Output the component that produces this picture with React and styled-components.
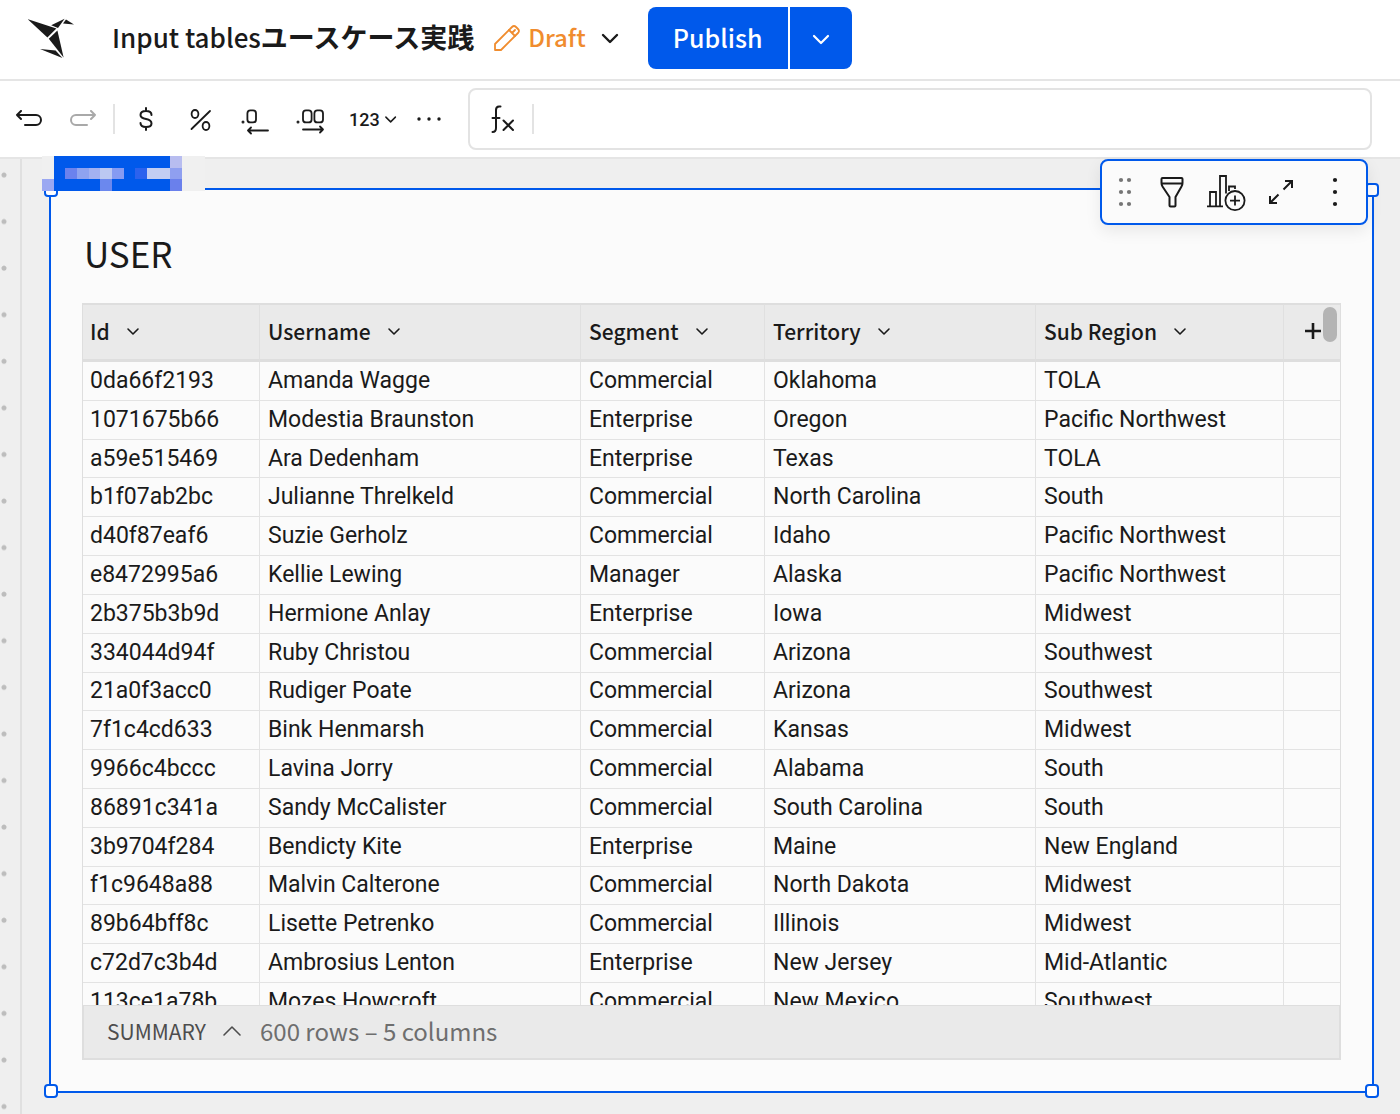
import React from 'react';
import styled, { createGlobalStyle } from 'styled-components';

const GlobalStyle = createGlobalStyle`
  * {
    box-sizing: border-box;
  }
  body {
    margin: 0;
    background: #efefef;
    color: #1a1a1a;
    font-family: "Noto Sans CJK JP", "Noto Sans", sans-serif;
  }
  button, input {
    font: inherit;
    color: inherit;
  }
`

const Page = styled.div`
  display: flex;
  flex-direction: column;
  min-height: 100vh;
`

const IconButton = styled.button`
  display: flex;
  align-items: center;
  justify-content: center;
  flex: none;
  padding: 0;
  border: 0;
  background: none;
  cursor: pointer;
  color: ${props => props.disabled ? '#a9a9a9' : '#1a1a1a'};
`

const Header = styled.header`
  display: flex;
  align-items: center;
  height: 81px;
  padding: 0 28px 3px;
  background: #fff;
  border-bottom: 2px solid #e5e5e5;
`

const LogoLink = styled.a`
  display: flex;
  margin-right: 38px;
`

const DocTitle = styled.h1`
  margin: 0 20px 0 0;
  padding-bottom: 2px;
  font-size: 26px;
  line-height: 36px;
  font-weight: 500;
  white-space: nowrap;
`

const TitleKana = styled.span`
  font-size: 27px;
  font-weight: 700;
`

const DraftButton = styled(IconButton)`
  gap: 8px;
  margin-right: 29px;
  font-size: 24px;
  line-height: 34px;
  font-weight: 500;
`

const DraftLabel = styled.span`
  margin-right: 7px;
  padding-bottom: 2px;
  color: #f08c2e;
`

const PublishGroup = styled.div`
  display: flex;
  gap: 2px;
`

const PublishButton = styled.button`
  display: flex;
  align-items: center;
  justify-content: center;
  width: ${props => props.$menu ? '62px' : '140px'};
  height: 62px;
  padding: ${props => props.$menu ? '2px 0 0' : '0 0 2px'};
  border: 0;
  border-radius: ${props => props.$menu ? '0 8px 8px 0' : '8px 0 0 8px'};
  background: #0059eb;
  color: #fff;
  font-size: 25px;
  font-weight: 500;
  cursor: pointer;
`

const Toolbar = styled.div`
  display: flex;
  align-items: center;
  height: 78px;
  padding: 0 28px 0 15px;
  background: #fff;
  border-bottom: 2px solid #e5e5e5;
`

const HistoryGroup = styled.div`
  display: flex;
  align-items: center;
  gap: 26px;
  margin-right: 16px;
`

const FormatGroup = styled.div`
  display: flex;
  align-items: center;
  gap: 20px;
  margin: 0 27px 0 14px;
`

const Divider = styled.span`
  flex: none;
  width: 2px;
  height: 30px;
  background: #e3e3e3;
`

const NumberButton = styled(IconButton)`
  width: 48px;
  gap: 4px;
  font-family: Roboto, sans-serif;
  font-size: 18px;
  font-weight: 500;
`

const FormulaBar = styled.label`
  display: flex;
  align-items: center;
  flex: 1;
  gap: 17px;
  height: 62px;
  padding: 0 21px;
  border: 2px solid #e3e3e3;
  border-radius: 8px;
`

const FormulaInput = styled.input`
  flex: 1;
  min-width: 0;
  border: 0;
  outline: 0;
  background: none;
  font-size: 22px;
`

const Canvas = styled.main`
  display: flex;
  flex: 1;
`

const Gutter = styled.div`
  flex: none;
  width: 22px;
  border-right: 2px solid #e0e0e0;
  background: radial-gradient(circle at 4px 16px, #bdbdbd 2px, transparent 3px) 0 0 / 20px calc(200% / 41);
`

const Frame = styled.section`
  position: relative;
  flex: 1;
  min-width: 0;
  margin: 29px 26px 21px 27px;
  padding: 41px 31px 31px;
  border: 2px solid #0059eb;
  background: #fbfbfb;
`

const Handle = styled.span`
  position: absolute;
  width: 14px;
  height: 14px;
  border: 2px solid #0059eb;
  border-radius: 4px;
  background: #fff;
  ${props => props.$top ? 'top: -7px;' : 'bottom: -7px;'}
  ${props => props.$left ? 'left: -7px;' : 'right: -7px;'}
`

const FrameTag = styled.svg`
  position: absolute;
  top: -34px;
  left: -9px;
`

const FloatingBar = styled.div`
  position: absolute;
  top: -31px;
  right: 4px;
  display: flex;
  align-items: center;
  gap: 22px;
  height: 66px;
  padding: 0 12px 0 10px;
  border: 2px solid #0059eb;
  border-radius: 8px;
  background: #fbfbfb;
  box-shadow: 0 6px 16px rgba(0, 0, 0, .08);
`

const TableTitle = styled.h2`
  margin: 0 0 28px 2px;
  font-size: 35px;
  line-height: 44px;
  font-weight: 400;
`

const TableBox = styled.div`
  position: relative;
  border: 1px solid #dedede;
`

const TableView = styled.div`
  height: 701px;
  overflow: hidden;
`

const Table = styled.table`
  width: 100%;
  height: 718px;
  table-layout: fixed;
  border-spacing: 0;
  font-family: Roboto, sans-serif;
  font-size: 23px;
  line-height: 28px;
`

const HeadCell = styled.th`
  width: ${props => props.$width};
  height: 58px;
  padding: 0 8px 2px;
  border-top: 1px solid #dedede;
  border-right: 1px solid #e0e0e0;
  border-bottom: 3px solid #dedede;
  background: #eaeaea;
  font-family: "Noto Sans CJK JP", "Noto Sans", sans-serif;
  font-size: 21px;
  font-weight: 500;
  text-align: left;
  &:first-child {
    padding-left: 7px;
  }
  &:last-child {
    padding-left: 20px;
    border-right: 0;
  }
`

const HeadLabel = styled.div`
  display: flex;
  align-items: center;
  gap: 16px;
`

const Cell = styled.td`
  padding: 0 8px;
  border-right: 1px solid #e3e3e3;
  border-bottom: 1px solid #e3e3e3;
  white-space: nowrap;
  &:first-child {
    padding-left: 7px;
  }
  &:last-child {
    border-right: 0;
  }
`

const ScrollThumb = styled.span`
  position: absolute;
  top: 3px;
  right: 3px;
  width: 14px;
  height: 35px;
  border-radius: 7px;
  background: #b4b4b4;
`

const Summary = styled.footer`
  display: flex;
  align-items: center;
  gap: 18px;
  height: 54px;
  padding: 0 23px 3px;
  border: 1px solid #dedede;
  background: #eaeaea;
  color: #6e6e6e;
  font-size: 24px;
`

const SummaryButton = styled(IconButton)`
  gap: 16px;
  color: #4d4d4d;
  font-size: 21px;
`

const columns = [
  { name: 'Id', width: '177px' },
  { name: 'Username', width: '321px' },
  { name: 'Segment', width: '184px' },
  { name: 'Territory', width: '271px' },
  { name: 'Sub Region', width: '248px' },
]

const users = [
  ['0da66f2193', 'Amanda Wagge', 'Commercial', 'Oklahoma', 'TOLA'],
  ['1071675b66', 'Modestia Braunston', 'Enterprise', 'Oregon', 'Pacific Northwest'],
  ['a59e515469', 'Ara Dedenham', 'Enterprise', 'Texas', 'TOLA'],
  ['b1f07ab2bc', 'Julianne Threlkeld', 'Commercial', 'North Carolina', 'South'],
  ['d40f87eaf6', 'Suzie Gerholz', 'Commercial', 'Idaho', 'Pacific Northwest'],
  ['e8472995a6', 'Kellie Lewing', 'Manager', 'Alaska', 'Pacific Northwest'],
  ['2b375b3b9d', 'Hermione Anlay', 'Enterprise', 'Iowa', 'Midwest'],
  ['334044d94f', 'Ruby Christou', 'Commercial', 'Arizona', 'Southwest'],
  ['21a0f3acc0', 'Rudiger Poate', 'Commercial', 'Arizona', 'Southwest'],
  ['7f1c4cd633', 'Bink Henmarsh', 'Commercial', 'Kansas', 'Midwest'],
  ['9966c4bccc', 'Lavina Jorry', 'Commercial', 'Alabama', 'South'],
  ['86891c341a', 'Sandy McCalister', 'Commercial', 'South Carolina', 'South'],
  ['3b9704f284', 'Bendicty Kite', 'Enterprise', 'Maine', 'New England'],
  ['f1c9648a88', 'Malvin Calterone', 'Commercial', 'North Dakota', 'Midwest'],
  ['89b64bff8c', 'Lisette Petrenko', 'Commercial', 'Illinois', 'Midwest'],
  ['c72d7c3b4d', 'Ambrosius Lenton', 'Enterprise', 'New Jersey', 'Mid-Atlantic'],
  ['113ce1a78b', 'Mozes Howcroft', 'Commercial', 'New Mexico', 'Southwest'],
]

// colours of the pixelated tag above the frame, row by row
const B = '#0059eb'
const G = '#f0f0f0'
const tagCells = [
  [G, B, B, B, B, B, B, B, B, B, B, '#b8bdf0', G, G],
  [G, B, '#6b82ee', '#8fa3f0', '#a3b1f1', '#bcc8f2', '#869bf2', B, '#2b62ee', '#c3cef3', '#c3cef3', '#8f9ff0', G, G],
  ['#9ba8f2', B, B, B, B, '#6b88ee', B, B, B, B, B, '#6a80ec', G, G],
]

const Icon = ({ w, h, stroke = 2, cap = 'round', children }) => (
  <svg
    width={w}
    height={h}
    viewBox={`0 0 ${w} ${h}`}
    fill="none"
    stroke="currentColor"
    strokeWidth={stroke}
    strokeLinecap={cap}
    strokeLinejoin={cap === 'round' ? 'round' : 'miter'}
    aria-hidden="true"
  >
    {children}
  </svg>
)

const Chevron = ({ w = 14, h = 9, stroke = 1.6, up }) => (
  <Icon w={w} h={h} stroke={stroke}>
    <path d={up
      ? `M2 ${h - 2}L${w / 2} 2L${w - 2} ${h - 2}`
      : `M2 2L${w / 2} ${h - 2}L${w - 2} 2`}
    />
  </Icon>
)

const Logo = () => (
  <svg width="46" height="42" viewBox="0 0 46 42" fill="#1a1a1a" aria-hidden="true">
    <path d="M-.5 2L28.4 11.6L19.4 20.6Z" />
    <path d="M23.2 8.2L36.6 1.8L30 11Z" />
    <path d="M38 2.4L46 7.4L35 6.4Z" />
    <path d="M29.4 13.4L35.6 40.5L20.8 21.8Z" />
    <path d="M12 32L27.6 33.4L34.4 41Z" />
  </svg>
)

const TopBar = () => (
  <Header>
    <LogoLink href="#" aria-label="Home"><Logo /></LogoLink>
    <DocTitle>Input tables<TitleKana>ユースケース実践</TitleKana></DocTitle>
    <DraftButton>
      <Icon w={26} h={26} stroke={1.8}>
        <g stroke="#f08c2e">
          <path d="M1 25V19L18 2Q20 0 22 2L24 4Q26 6 24 8L7 25Z" />
          <path d="M15 5L21 11M18 8L21 5" />
        </g>
      </Icon>
      <DraftLabel>Draft</DraftLabel>
      <Chevron w={18} h={11} stroke={2.4} />
    </DraftButton>
    <PublishGroup>
      <PublishButton>Publish</PublishButton>
      <PublishButton $menu aria-label="Publish options">
        <Chevron w={18} h={11} stroke={2.2} />
      </PublishButton>
    </PublishGroup>
  </Header>
)

const FormatBar = () => (
  <Toolbar>
    <HistoryGroup>
      <IconButton aria-label="Undo">
        <Icon w={28} h={18}>
          <path d="M6 1L2 5L6 9M2 5H21A5 5 0 0 1 21 15H10" />
        </Icon>
      </IconButton>
      <IconButton aria-label="Redo" disabled>
        <Icon w={28} h={18}>
          <path d="M22 1L26 5L22 9M26 5H7A5 5 0 0 0 7 15H18" />
        </Icon>
      </IconButton>
    </HistoryGroup>
    <Divider />
    <FormatGroup>
      <IconButton aria-label="Currency">
        <Icon w={34} h={26}>
          <path d="M22.5 9Q22.5 5 17 5Q11.5 5 11.5 9Q11.5 12 17 13Q22.5 14 22.5 17.5Q22.5 21 17 21Q11.5 21 11.5 17M17 2V5M17 21V24" />
        </Icon>
      </IconButton>
      <IconButton aria-label="Percent">
        <Icon w={34} h={28} stroke={1.8}>
          <ellipse cx="12" cy="9" rx="3.4" ry="4" />
          <ellipse cx="23" cy="21" rx="3.4" ry="4" />
          <path d="M27 6L8.5 24" />
        </Icon>
      </IconButton>
      <IconButton aria-label="Fewer decimals">
        <Icon w={34} h={34} stroke={1.8}>
          <circle cx="6" cy="20" r=".6" />
          <rect x="10.4" y="8.4" width="8.6" height="12" rx="3" />
          <path d="M31 28.5H11M14 25.5L11 28.5L14 31.5" />
        </Icon>
      </IconButton>
      <IconButton aria-label="More decimals">
        <Icon w={38} h={34} stroke={1.8}>
          <circle cx="7" cy="20" r=".6" />
          <rect x="12" y="8.4" width="8.6" height="12" rx="3" />
          <rect x="23.4" y="8.4" width="8.6" height="12" rx="3" />
          <path d="M12 27.5H32M29 24.5L32 27.5L29 30.5" />
        </Icon>
      </IconButton>
      <NumberButton>
        123
        <Chevron />
      </NumberButton>
      <IconButton aria-label="More formats">
        <Icon w={24} h={6}>
          <g fill="currentColor" stroke="none">
            <circle cx="2" cy="3" r="1.7" />
            <circle cx="12" cy="3" r="1.7" />
            <circle cx="22" cy="3" r="1.7" />
          </g>
        </Icon>
      </IconButton>
    </FormatGroup>
    <FormulaBar>
      <Icon w={24} h={30}>
        <path d="M9.5 2.5H8Q5 2.5 5 6V24Q5 28 1.5 28M1.5 14H8.5M12.5 16.5L22 26M22 16.5L12.5 26" />
      </Icon>
      <Divider />
      <FormulaInput aria-label="Formula" />
    </FormulaBar>
  </Toolbar>
)

const ElementBar = () => (
  <FloatingBar>
    <IconButton aria-label="Move">
      <Icon w={26} h={38}>
        <g fill="#757575" stroke="none">
          {[7, 19, 31].map(y => (
            <React.Fragment key={y}>
              <circle cx="9" cy={y} r="2.1" />
              <circle cx="17" cy={y} r="2.1" />
            </React.Fragment>
          ))}
        </g>
      </Icon>
    </IconButton>
    <IconButton aria-label="Filter">
      <Icon w={24} h={36}>
        <path d="M2.5 4H21.5Q22.5 4 22.5 5V9Q22.5 11 21.5 12.5L15.5 23V31.5Q15.5 32.5 14.5 32.5H10.5Q9.5 32.5 9.5 31.5V23L2.5 12.5Q1.5 11 1.5 9V5Q1.5 4 2.5 4ZM1.5 9.5H22.5" />
      </Icon>
    </IconButton>
    <IconButton aria-label="Create child element">
      <Icon w={40} h={40} stroke={1.8} cap="butt">
        <path d="M1 34.4H17M4 34V20H10V34M14 34V4H20V21.5M23 19V14.5H29V17" />
        <circle cx="29" cy="28.6" r="9.6" />
        <path d="M29 23.6V33.6M24 28.6H34" />
      </Icon>
    </IconButton>
    <IconButton aria-label="Maximize">
      <Icon w={26} h={36} cap="butt">
        <path d="M17 7H24V14M24 7L15.5 15.5M2 22V29H9M2 29L10.5 20.5" />
      </Icon>
    </IconButton>
    <IconButton aria-label="More">
      <Icon w={38} h={36}>
        <g fill="currentColor" stroke="none">
          <circle cx="19" cy="6" r="2.1" />
          <circle cx="19" cy="18" r="2.1" />
          <circle cx="19" cy="30" r="2.1" />
        </g>
      </Icon>
    </IconButton>
  </FloatingBar>
)

const UserTable = () => (
  <TableBox>
    <TableView>
      <Table>
        <thead>
          <tr>
            {columns.map(column => (
              <HeadCell key={column.name} $width={column.width}>
                <HeadLabel>
                  {column.name}
                  <IconButton aria-label={`${column.name} menu`}><Chevron /></IconButton>
                </HeadLabel>
              </HeadCell>
            ))}
            <HeadCell>
              <IconButton aria-label="Add column">
                <Icon w={18} h={18} stroke={2.6} cap="butt">
                  <path d="M9 1V17M1 9H17" />
                </Icon>
              </IconButton>
            </HeadCell>
          </tr>
        </thead>
        <tbody>
          {users.map(user => (
            <tr key={user[0]}>
              {user.map((value, index) => <Cell key={index}>{value}</Cell>)}
              <Cell />
            </tr>
          ))}
        </tbody>
      </Table>
    </TableView>
    <ScrollThumb />
    <Summary>
      <SummaryButton>
        SUMMARY
        <Chevron w={20} h={12} up />
      </SummaryButton>
      <span>600 rows – 5 columns</span>
    </Summary>
  </TableBox>
)

const App = () => (
  <Page>
    <GlobalStyle />
    <TopBar />
    <FormatBar />
    <Canvas>
      <Gutter />
      <Frame>
        <Handle $top $left />
        <Handle $top />
        <Handle $left />
        <Handle />
        <FrameTag width="163" height="35" viewBox="0 0 14 3" preserveAspectRatio="none" shapeRendering="crispEdges" aria-hidden="true">
          {tagCells.map((row, y) => row.map((fill, x) => (
            <rect key={`${x}-${y}`} x={x} y={y} width="1" height="1" fill={fill} />
          )))}
        </FrameTag>
        <ElementBar />
        <TableTitle>USER</TableTitle>
        <UserTable />
      </Frame>
    </Canvas>
  </Page>
)

export default App;
